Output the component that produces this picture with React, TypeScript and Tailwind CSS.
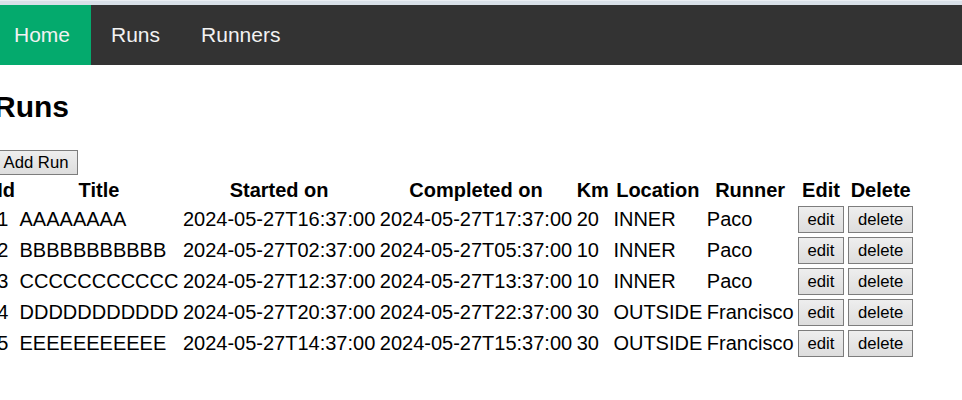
const runs = [
  { id: 1, title: "AAAAAAAA", start: "2024-05-27T16:37:00", end: "2024-05-27T17:37:00", km: 20, location: "INNER", runner: "Paco" },
  { id: 2, title: "BBBBBBBBBBB", start: "2024-05-27T02:37:00", end: "2024-05-27T05:37:00", km: 10, location: "INNER", runner: "Paco" },
  { id: 3, title: "CCCCCCCCCCC", start: "2024-05-27T12:37:00", end: "2024-05-27T13:37:00", km: 10, location: "INNER", runner: "Paco" },
  { id: 4, title: "DDDDDDDDDDD", start: "2024-05-27T20:37:00", end: "2024-05-27T22:37:00", km: 30, location: "OUTSIDE", runner: "Francisco" },
  { id: 5, title: "EEEEEEEEEEE", start: "2024-05-27T14:37:00", end: "2024-05-27T15:37:00", km: 30, location: "OUTSIDE", runner: "Francisco" },
];

const headers = ["Id", "Title", "Started on", "Completed on", "Km", "Location", "Runner", "Edit", "Delete"];

function Btn({ label, h }: { label: string; h: string }) {
  return (
    <button
      className={`${h} px-[8.5px] border border-[#7d7d7d] bg-gradient-to-b from-[#eeeeee] to-[#dddddd] text-[16.7px] leading-[19px] text-black`}
    >
      {label}
    </button>
  );
}

export default function App() {
  return (
    <div className="w-[962px] h-[400px] bg-white font-['Liberation_Sans',Arial,sans-serif] text-black overflow-hidden">
      {/* top strip */}
      <div className="h-[5px] bg-[#d9e0e8] border-t border-[#eaeef3]" />

      {/* NAV */}
      <nav className="h-[60px] bg-[#333333] flex flex-row items-stretch text-[21px] text-[#f2f2f2]">
        <a className="w-[91px] pl-[14px] flex items-center bg-[#04aa6d]">Home</a>
        <a className="pl-[20px] pr-[20px] flex items-center">Runs</a>
        <a className="pl-[21px] flex items-center">Runners</a>
      </nav>

      {/* CONTENT */}
      <section className="ml-[-6px]">
        <h1 className="mt-[25px] mb-[25px] text-[30px] leading-[34.5px] font-bold">Runs</h1>
        <div className="flex">
          <Btn label="Add Run" h="h-[25px]" />
        </div>
        <table className="mt-[1px] border-separate border-spacing-[2.5px] text-[20px] leading-[23px]">
          <thead>
            <tr>
              {headers.map((h) => (
                <th key={h} className="p-[1.25px] font-bold text-center">
                  {h}
                </th>
              ))}
            </tr>
          </thead>
          <tbody>
            {runs.map((r) => (
              <tr key={r.id}>
                <td className="p-[1.25px]">{r.id}</td>
                <td className="p-[1.25px]">{r.title}</td>
                <td className="p-[1.25px]">{r.start}</td>
                <td className="p-[1.25px]">{r.end}</td>
                <td className="p-[1.25px]">{r.km}</td>
                <td className="p-[1.25px]">{r.location}</td>
                <td className="p-[1.25px]">{r.runner}</td>
                <td className="p-[1.25px]">
                  <Btn label="edit" h="h-[26.5px]" />
                </td>
                <td className="p-[1.25px]">
                  <Btn label="delete" h="h-[26.5px]" />
                </td>
              </tr>
            ))}
          </tbody>
        </table>
      </section>
    </div>
  );
}
